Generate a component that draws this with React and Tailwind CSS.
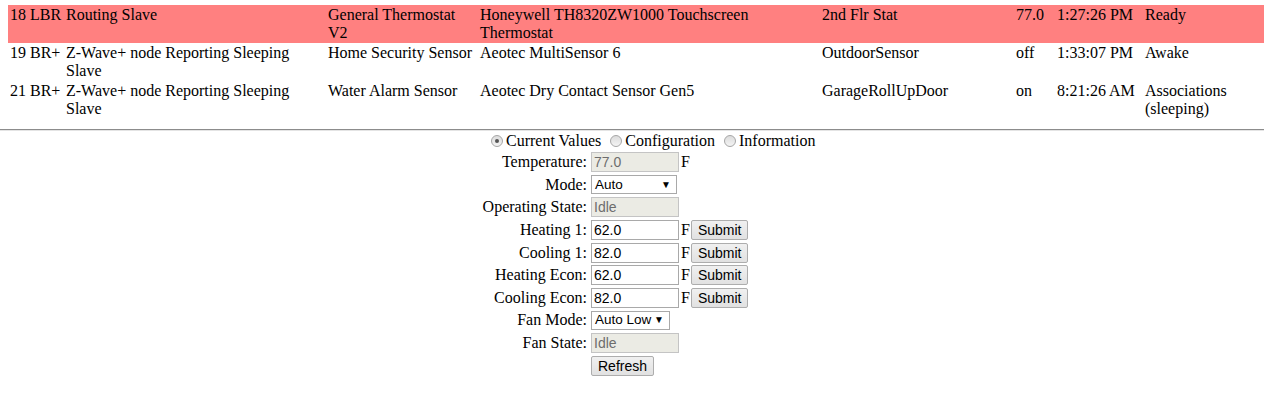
import React from 'react';

const NODES = [
  {
    id: '18',
    kind: 'LBR',
    type: 'Routing Slave',
    generic: 'General Thermostat V2',
    product: 'Honeywell TH8320ZW1000 Touchscreen Thermostat',
    name: '2nd Flr Stat',
    value: '77.0',
    time: '1:27:26 PM',
    status: 'Ready',
    selected: true,
  },
  {
    id: '19',
    kind: 'BR+',
    type: 'Z-Wave+ node Reporting Sleeping Slave',
    generic: 'Home Security Sensor',
    product: 'Aeotec MultiSensor 6',
    name: 'OutdoorSensor',
    value: 'off',
    time: '1:33:07 PM',
    status: 'Awake',
  },
  {
    id: '21',
    kind: 'BR+',
    type: 'Z-Wave+ node Reporting Sleeping Slave',
    generic: 'Water Alarm Sensor',
    product: 'Aeotec Dry Contact Sensor Gen5',
    name: 'GarageRollUpDoor',
    value: 'on',
    time: '8:21:26 AM',
    status: 'Associations (sleeping)',
  },
];

function Radio({ checked, label }) {
  return (
    <label className="flex items-center">
      <span className="ml-[5px] mr-[3px] w-[12px] h-[12px] rounded-full border border-[#a6a6a6] bg-gradient-to-b from-[#dcdcdc] to-[#f4f4f4] flex items-center justify-center">
        {checked && <span className="w-[4px] h-[4px] rounded-full bg-[#555]" />}
      </span>
      <span>{label}</span>
    </label>
  );
}

function TextBox({ value, disabled }) {
  return (
    <div
      className={`w-[88px] h-[20px] border px-[2px] flex items-center text-[14px] font-['Liberation_Sans',Arial,sans-serif] ${
        disabled ? 'bg-[#ebebe4] border-[#c4c4c4] text-[#6d6d6d]' : 'bg-white border-[#a9a9a9] text-black'
      }`}
    >
      {value}
    </div>
  );
}

function Dropdown({ value, width }) {
  return (
    <div
      className={`${width} h-[19px] border border-[#a9a9a9] bg-white pl-[3px] pr-[5px] flex items-center justify-between whitespace-nowrap text-[13.5px] font-['Liberation_Sans',Arial,sans-serif]`}
    >
      <span>{value}</span>
      <span className="text-[10px]">▼</span>
    </div>
  );
}

function Button({ children }) {
  return (
    <div className="h-[20px] px-[6px] flex items-center border border-[#adadad] rounded-[2px] bg-gradient-to-b from-[#f0f0f0] to-[#e1e1e1] text-[14px] font-['Liberation_Sans',Arial,sans-serif]">
      {children}
    </div>
  );
}

function FormRow({ label, children }) {
  return (
    <div className="flex items-center h-[22.6px]">
      <div className="w-[107px] text-right whitespace-nowrap">{label}</div>
      <div className="pl-[4px] flex items-center">{children}</div>
    </div>
  );
}

function Unit({ submit }) {
  return (
    <>
      <span className="ml-[2px] mr-[1px]">F</span>
      {submit && <Button>Submit</Button>}
    </>
  );
}

export default function App() {
  return (
    <div className="w-[1264px] h-[406px] bg-white text-black text-[16px] font-['Liberation_Serif','Times_New_Roman',serif]">
      {/* node list */}
      <div className="pt-[5px] ml-[8px]">
        {NODES.map((n) => (
          <div
            key={n.id}
            className={`grid grid-cols-[20px_36px_262px_152px_342px_194px_41px_88px_1fr] pl-[2px] py-[1px] leading-[18px] ${
              n.selected ? 'bg-[#ff8080]' : ''
            }`}
          >
            <div className="whitespace-nowrap">{n.id}</div>
            <div className="whitespace-nowrap">{n.kind}</div>
            <div className="max-w-[235px]">{n.type}</div>
            <div className="max-w-[146px]">{n.generic}</div>
            <div className="max-w-[330px]">{n.product}</div>
            <div className="whitespace-nowrap">{n.name}</div>
            <div className="whitespace-nowrap">{n.value}</div>
            <div className="whitespace-nowrap">{n.time}</div>
            <div className="max-w-[110px]">{n.status}</div>
          </div>
        ))}
      </div>

      <hr className="mt-[10px] border-0 border-t border-t-[#8c8c8c] border-b border-b-[#e4e4e4]" />

      {/* thermostat panel */}
      <div className="ml-[480px] w-[345px] leading-[18px]">
        <div className="flex items-center h-[20px] pl-[6px]">
          <Radio checked label="Current Values" />
          <span className="w-[4px]" />
          <Radio label="Configuration" />
          <span className="w-[4px]" />
          <Radio label="Information" />
        </div>
        <FormRow label="Temperature:">
          <TextBox value="77.0" disabled />
          <Unit />
        </FormRow>
        <FormRow label="Mode:">
          <Dropdown value="Auto" width="w-[86px]" />
        </FormRow>
        <FormRow label="Operating State:">
          <TextBox value="Idle" disabled />
        </FormRow>
        <FormRow label="Heating 1:">
          <TextBox value="62.0" />
          <Unit submit />
        </FormRow>
        <FormRow label="Cooling 1:">
          <TextBox value="82.0" />
          <Unit submit />
        </FormRow>
        <FormRow label="Heating Econ:">
          <TextBox value="62.0" />
          <Unit submit />
        </FormRow>
        <FormRow label="Cooling Econ:">
          <TextBox value="82.0" />
          <Unit submit />
        </FormRow>
        <FormRow label="Fan Mode:">
          <Dropdown value="Auto Low" width="w-[79px]" />
        </FormRow>
        <FormRow label="Fan State:">
          <TextBox value="Idle" disabled />
        </FormRow>
        <FormRow label="">
          <Button>Refresh</Button>
        </FormRow>
      </div>
    </div>
  );
}
